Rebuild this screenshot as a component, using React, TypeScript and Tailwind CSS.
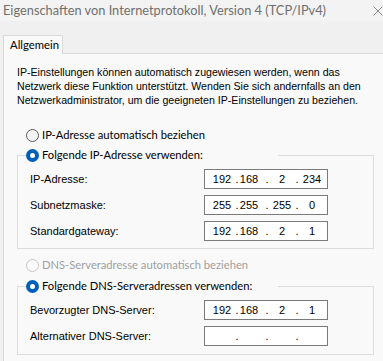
import React from 'react';

const TAHOMA = "font-['Liberation_Sans',Arial,sans-serif]";

interface RadioProps {
    checked?: boolean;
    disabled?: boolean;
}

function Radio({ checked, disabled }: RadioProps) {
    if (checked) {
        return (
            <span className="flex h-[13px] w-[13px] shrink-0 items-center justify-center rounded-full bg-[#005fb8]">
                <span className="h-[5px] w-[5px] rounded-full bg-white" />
            </span>
        );
    }
    return (
        <span
            className={`h-[13px] w-[13px] shrink-0 rounded-full border ${disabled ? 'border-[#c6c6c6] bg-[#fafafa]' : 'border-[#5c5c5c] bg-[#f4f4f4]'
                }`}
        />
    );
}

// Windows IP address control: four octets separated by dots
function IpField({ octets }: { octets: string[] }) {
    const cells: { w: string; text: string }[] = [
        { w: 'w-[18px]', text: octets[0] },
        { w: 'w-[12px]', text: '.' },
        { w: 'w-[12px]', text: octets[1] },
        { w: 'w-[24px]', text: '.' },
        { w: 'w-[6px]', text: octets[2] },
        { w: 'w-[24px]', text: '.' },
        { w: 'w-[6px]', text: octets[3] },
    ];
    return (
        <div className={`flex h-[20px] w-[124px] shrink-0 items-center border border-[#7a7a7a] bg-white pl-[8px] text-[11px] text-black ${TAHOMA}`}>
            {cells.map((c, i) => (
                <span key={i} className={`flex shrink-0 justify-center whitespace-nowrap ${c.w}`}>
                    {c.text}
                </span>
            ))}
        </div>
    );
}

function FieldRow({ label, octets }: { label: string; octets: string[] }) {
    return (
        <div className="flex h-[20px] items-center">
            <span className={`w-[174px] shrink-0 text-[11px] text-black ${TAHOMA}`}>{label}</span>
            <IpField octets={octets} />
        </div>
    );
}

function GroupBox({ title, children, pb }: { title: string; children: React.ReactNode; pb: string }) {
    return (
        <fieldset className="w-[357px] border border-[#dcdcdc]">
            <legend className="ml-[8px] w-[252px]">
                <div className="flex h-[20px] items-center gap-[3px] text-[11.2px] text-black">
                    <Radio checked />
                    <span className="whitespace-nowrap">{title}</span>
                </div>
            </legend>
            <div className={`flex flex-col gap-[6px] pl-[12px] pt-[4px] ${pb}`}>{children}</div>
        </fieldset>
    );
}

export default function App() {
    return (
        <div className="flex h-[361px] w-[383px] flex-col overflow-hidden bg-[#f0f0f0] font-['Lato','Noto_Sans',sans-serif]">
            {/* Title bar */}
            <div className="flex h-[21px] shrink-0 items-center bg-[#f3f3f3] pl-[3px]">
                <span className="whitespace-nowrap text-[12.8px] text-[#6f6f6f]">
                    Eigenschaften von Internetprotokoll, Version 4 (TCP/IPv4)
                </span>
                <svg className="ml-auto shrink-0" width="10" height="10" viewBox="0 0 10 10">
                    <path d="M0.5 0.5 L9.5 9.5 M9.5 0.5 L0.5 9.5" stroke="#8a8a8a" strokeWidth="1" />
                </svg>
            </div>

            {/* Tab strip */}
            <div className="flex shrink-0 pl-[3px] pt-[14px]">
                <div className="relative z-10 -mb-px flex h-[19px] w-[60px] items-center border border-b-0 border-[#d9d9d9] bg-[#f9f9f9] pl-[6px] text-[11.3px] text-black">
                    Allgemein
                </div>
            </div>

            {/* Panel */}
            <div className="ml-[3px] flex flex-1 flex-col border-l border-t border-[#d9d9d9] bg-[#f9f9f9] pl-[13px] pt-[11px]">
                <p className={`whitespace-nowrap text-[10.6px] leading-[14px] text-black ${TAHOMA}`}>
                    IP-Einstellungen können automatisch zugewiesen werden, wenn das
                    <br />
                    Netzwerk diese Funktion unterstützt. Wenden Sie sich andernfalls an den
                    <br />
                    Netzwerkadministrator, um die geeigneten IP-Einstellungen zu beziehen.
                </p>

                <div className="mt-[18px] flex h-[20px] items-center gap-[3px] pl-[9px] text-[11.2px] text-black">
                    <Radio />
                    <span>IP-Adresse automatisch beziehen</span>
                </div>

                <GroupBox title="Folgende IP-Adresse verwenden:" pb="pb-[7px]">
                    <FieldRow label="IP-Adresse:" octets={['192', '168', '2', '234']} />
                    <FieldRow label="Subnetzmaske:" octets={['255', '255', '255', '0']} />
                    <FieldRow label="Standardgateway:" octets={['192', '168', '2', '1']} />
                </GroupBox>

                <div className="mt-[6px] flex h-[20px] items-center gap-[3px] pl-[9px] text-[11.2px] text-[#a0a0a0]">
                    <Radio disabled />
                    <span>DNS-Serveradresse automatisch beziehen</span>
                </div>

                <div className="mt-px">
                    <GroupBox title="Folgende DNS-Serveradressen verwenden:" pb="pb-[8px]">
                        <FieldRow label="Bevorzugter DNS-Server:" octets={['192', '168', '2', '1']} />
                        <FieldRow label="Alternativer DNS-Server:" octets={['', '', '', '']} />
                    </GroupBox>
                </div>
            </div>
        </div>
    );
}
